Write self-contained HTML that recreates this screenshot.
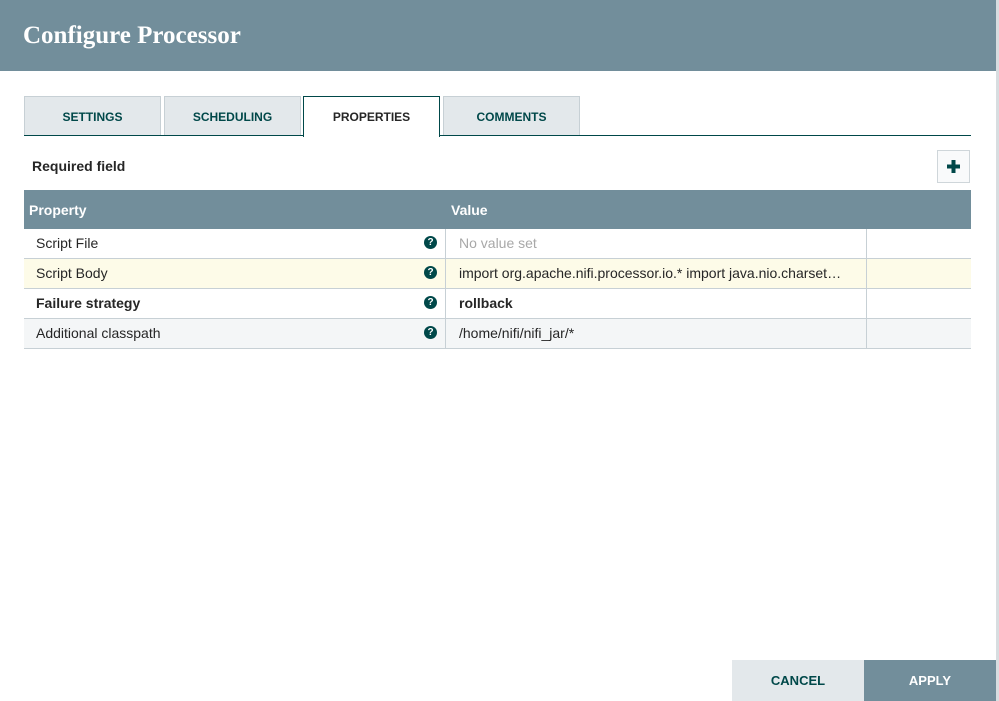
<!DOCTYPE html>
<html><head><style>
body{margin:0;width:999px;height:701px;background:#fff;font-family:"Liberation Sans",sans-serif;position:relative;overflow:hidden}
.hdr{position:absolute;left:0;top:0;width:996px;height:71px;background:#728e9b;color:#fff;font-family:"Liberation Serif",serif;font-weight:bold;font-size:25px}
.hdr span{position:absolute;left:23px;top:22px}
.edge{position:absolute;left:996px;top:0;width:3px;height:701px;background:#d8dde0}
.tab{position:absolute;top:96px;height:39px;background:#e3e8eb;border:1px solid #c7d0d5;border-bottom:none;font-size:12px;font-weight:bold;color:#004849;text-align:center;line-height:40px;box-sizing:border-box}
.tab.act{background:#fff;border:1px solid #004849;border-bottom:none;color:#262626;height:41px}
.tline{position:absolute;left:24px;top:135px;width:947px;height:1px;background:#004849}
.req{position:absolute;left:32px;top:158px;font-size:14px;font-weight:bold;color:#262626}
.plus{position:absolute;left:937px;top:150px;width:33px;height:33px;border:1px solid #cfd6da;box-sizing:border-box;background:#f9fafb}
.th{position:absolute;left:24px;top:190px;width:947px;height:39px;background:#728e9b;color:#fff;font-size:14px;font-weight:bold}
.row{position:absolute;left:24px;width:947px;height:30px;border-bottom:1px solid #c7d0d5;box-sizing:border-box;font-size:14px;color:#262626}
.row .n{position:absolute;left:12px;top:6px}
.row .v{position:absolute;left:435px;top:6px}
.row .d1{position:absolute;left:421px;top:0;width:1px;height:30px;background:#c7d0d5}
.row .d2{position:absolute;left:842px;top:0;width:1px;height:30px;background:#c7d0d5}
.q{position:absolute;left:400px;top:7px;width:13px;height:13px;border-radius:50%;background:#004849;color:#fff;font-size:10px;font-weight:bold;text-align:center;line-height:13px}
.btn{position:absolute;top:660px;height:41px;font-size:13px;font-weight:bold;text-align:center;line-height:41px}
</style></head><body>
<div class="hdr"><span>Configure Processor</span></div>
<div class="edge"></div>
<div class="tab" style="left:24px;width:137px">SETTINGS</div>
<div class="tab" style="left:164px;width:137px">SCHEDULING</div>
<div class="tline"></div>
<div class="tab act" style="left:303px;width:137px;top:96px">PROPERTIES</div>
<div class="tab" style="left:443px;width:137px">COMMENTS</div>
<div class="req">Required field</div>
<div class="plus"><svg width="31" height="31" viewBox="0 0 31 31"><path d="M15.5 9v13M9 15.5h13" stroke="#004849" stroke-width="4"/></svg></div>
<div class="th"><span style="position:absolute;left:5px;top:12px">Property</span><span style="position:absolute;left:427px;top:12px">Value</span></div>
<div class="row" style="top:229px;background:#fff"><span class="n">Script File</span><div class="q">?</div><div class="d1"></div><span class="v" style="color:#a8a8a8">No value set</span><div class="d2"></div></div>
<div class="row" style="top:259px;background:#fdfbe8"><span class="n">Script Body</span><div class="q">?</div><div class="d1"></div><span class="v">import org.apache.nifi.processor.io.* import java.nio.charset…</span><div class="d2"></div></div>
<div class="row" style="top:289px;background:#fff;font-weight:bold"><span class="n">Failure strategy</span><div class="q">?</div><div class="d1"></div><span class="v">rollback</span><div class="d2"></div></div>
<div class="row" style="top:319px;background:#f4f6f7"><span class="n">Additional classpath</span><div class="q">?</div><div class="d1"></div><span class="v">/home/nifi/nifi_jar/*</span><div class="d2"></div></div>
<div class="btn" style="left:732px;width:132px;background:#e3e8eb;color:#004849">CANCEL</div>
<div class="btn" style="left:864px;width:132px;background:#728e9b;color:#fff">APPLY</div>
</body></html>
